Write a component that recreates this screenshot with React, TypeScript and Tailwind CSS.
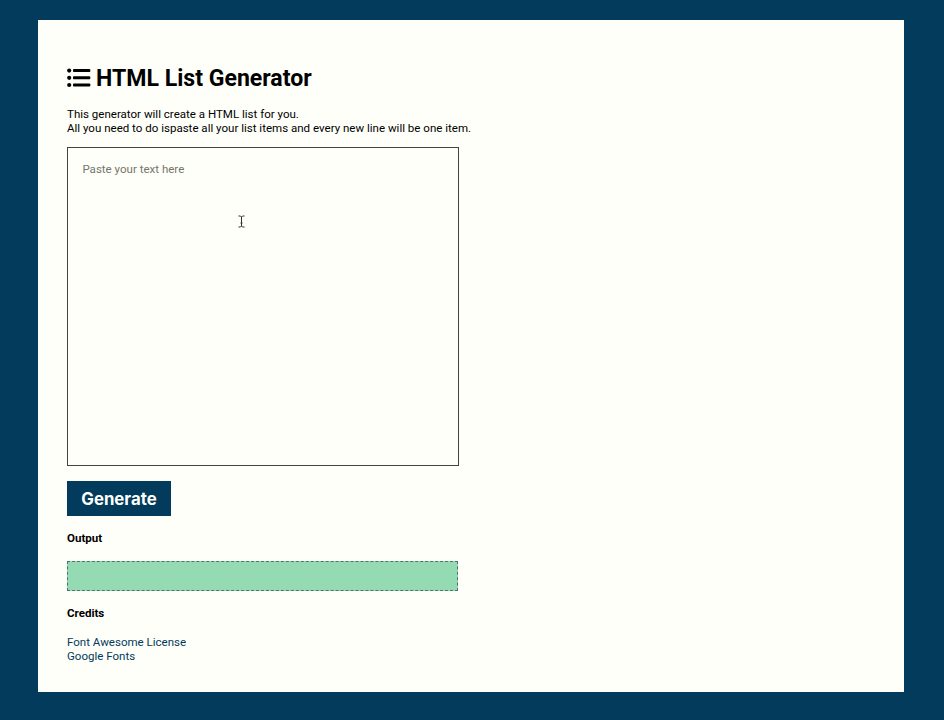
import React from "react";

function ListIcon() {
  return (
    <svg viewBox="0 0 24 20" className="h-5 w-6 shrink-0" fill="currentColor" aria-hidden="true">
      <circle cx="2.2" cy="2.6" r="2.1" />
      <circle cx="2.2" cy="9.8" r="2.1" />
      <circle cx="2.2" cy="17" r="2.1" />
      <rect x="6" y="1.1" width="17.3" height="3" rx="0.8" />
      <rect x="6" y="8.3" width="17.3" height="3" rx="0.8" />
      <rect x="6" y="15.5" width="17.3" height="3" rx="0.8" />
    </svg>
  );
}

function TextCursor() {
  return (
    <svg
      viewBox="0 0 7 13"
      className="pointer-events-none absolute left-[171px] top-[68px] h-[13px] w-[7px]"
      fill="none"
      stroke="#333322"
      aria-hidden="true"
    >
      <path d="M0.5 1H2.5L3.5 2L4.5 1H6.5M3.5 2V11M0.5 12H2.5L3.5 11L4.5 12H6.5M2.5 8H4.5" />
    </svg>
  );
}

export default function App() {
  return (
    <div className="h-[720px] overflow-hidden bg-[#023b5b] pt-5 pl-[38px] font-['Roboto',sans-serif] text-[11.54px] leading-[14px] text-black">
      <main className="h-[672px] w-[866px] bg-[#fffffa] pt-[44px] pl-[29px]">
        <h1 className="flex h-7 items-center gap-[5px] text-[23.08px] leading-7 font-bold">
          <ListIcon />
          <span className="pt-[2px] whitespace-nowrap">HTML List Generator</span>
        </h1>
        <p className="mt-[15px] whitespace-nowrap">
          This generator will create a HTML list for you.
          <br />
          All you need to do ispaste all your list items and every new line will be one item.
        </p>
        <div className="relative mt-3 h-[319px] w-[391.5px]">
          <textarea
            className="block h-full w-full resize-none border border-[#44443c] bg-transparent px-[14.4px] py-[14px] outline-none placeholder:text-[#75756a]"
            placeholder="Paste your text here"
          />
          <TextCursor />
        </div>
        <button className="mt-[15px] block h-[35px] w-[104px] bg-[#023b5b] pt-px font-['Inter',sans-serif] text-[16.8px] leading-[35px] font-bold text-white">
          Generate
        </button>
        <h2 className="mt-[15px] font-bold">Output</h2>
        <div className="mt-4 h-[30px] w-[391.4px] border border-dashed border-[#4c756b] bg-[#94dbb3]" />
        <h2 className="mt-[15px] font-bold">Credits</h2>
        <div className="mt-[15px] flex flex-col items-start text-[#023b5b]">
          <a href="#license">Font Awesome License</a>
          <a href="#fonts">Google Fonts</a>
        </div>
      </main>
    </div>
  );
}
